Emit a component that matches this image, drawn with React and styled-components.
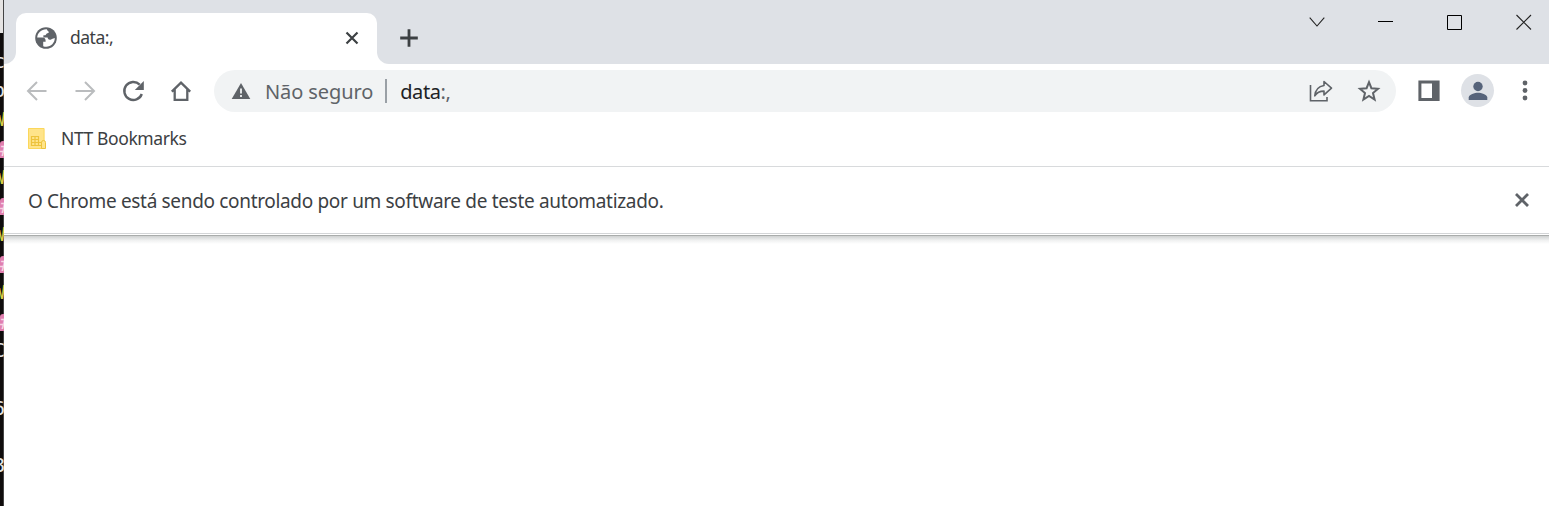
import React from 'react';
import styled, { createGlobalStyle } from 'styled-components';

const Global = createGlobalStyle`
  * { box-sizing: border-box; }
  body { margin: 0; overflow: hidden; background: #fff; }
`;

const Desktop = styled.div`
  display: flex;
  height: 506px;
  font-family: 'Noto Sans', 'Open Sans', sans-serif;
`;

const Terminal = styled.div`
  width: 4px;
  flex: none;
  overflow: hidden;
  background: linear-gradient(90deg, #0f0c0c 3px, #444 3px);
  font-family: 'DejaVu Sans Mono', monospace;
`;

const TerminalTitle = styled.div`
  width: 3px;
  height: 33px;
  margin-bottom: 14px;
  background: #e6e4e3;
`;

const TerminalRow = styled.div`
  display: flex;
  justify-content: flex-end;
  height: 28.9px;
  font-size: 20px;
  line-height: 28.9px;
  color: ${(p) => p.$color || '#e4e4e4'};
`;

const TerminalCell = styled.span`
  margin-right: -1px;
`;

const TerminalBlock = styled.span`
  width: 4px;
  height: 17px;
  margin-top: 7px;
  line-height: 17px;
  overflow: hidden;
  border-radius: 3px 0 0 0;
  background: #e07fae;
`;

const Browser = styled.div`
  flex: 1;
  min-width: 0;
  background: #fff;
`;

const TabStrip = styled.div`
  display: flex;
  height: 64px;
`;

const StripStart = styled.div`
  width: 12px;
  background: #dee1e6;
  border-bottom-right-radius: 12px;
`;

const TabSlot = styled.div`
  width: 361px;
  padding-top: 13px;
  background: linear-gradient(#dee1e6 32px, #fff 32px);
`;

const Tab = styled.div`
  display: flex;
  align-items: center;
  height: 51px;
  padding: 0 18px 2px 18px;
  background: #fff;
  border-radius: 10px 10px 0 0;
`;

const StripEnd = styled.div`
  flex: 1;
  display: flex;
  align-items: flex-start;
  padding-right: 17px;
  background: #dee1e6;
  border-bottom-left-radius: 12px;
`;

const Label = styled.span`
  white-space: pre;
  font-size: ${(p) => p.$size}px;
  letter-spacing: ${(p) => p.$track || 0}px;
  color: ${(p) => p.$color || '#3c4043'};
  line-height: 26px;
  margin-left: ${(p) => p.$left || 0}px;
  margin-top: ${(p) => p.$top || 0}px;
`;

const Icon = styled.svg`
  display: block;
  flex: none;
  margin-left: ${(p) => p.$left || 0}px;
  margin-top: ${(p) => p.$top || 0}px;
  fill: none;
  stroke: ${(p) => p.$color || '#5f6368'};
`;

const Spacer = styled.div`
  flex: 1;
`;

const Toolbar = styled.div`
  display: flex;
  align-items: center;
  height: 54px;
  padding: 0 11px 0 21px;
`;

const Omnibox = styled.div`
  display: flex;
  align-items: center;
  width: 1182px;
  height: 42px;
  margin: 0 22px 0 21px;
  padding: 0 15px 0 17px;
  border-radius: 21px;
  background: #f1f3f4;
`;

const Divider = styled.div`
  width: 2px;
  height: 24px;
  margin-left: 12px;
  background: #9aa0a6;
`;

const Avatar = styled.div`
  display: flex;
  align-items: center;
  justify-content: center;
  width: 33px;
  height: 33px;
  margin: -1px 0 0 21px;
  border-radius: 50%;
  background: #dee1e6;
`;

const Bookmarks = styled.div`
  display: flex;
  align-items: center;
  height: 49px;
  padding: 0 0 7px 23px;
  border-bottom: 1px solid #d8dadc;
`;

const InfoBar = styled.div`
  display: flex;
  align-items: center;
  height: 67px;
  padding: 0 19px 0 24px;
  border-bottom: 1px solid #d3d5d7;
`;

const PageEdge = styled.div`
  height: 9px;
  margin-top: 1px;
  border-top: 1px solid #a9acab;
  background: linear-gradient(#cfd1d1, #f0f1f1 55%, #fff);
`;

const rows = [
  { t: 'c' },
  { t: 'p' },
  { t: 'W', color: '#d8cc45' },
  { t: '#', block: true },
  { t: 'W', color: '#d8cc45' },
  { t: '#', block: true },
  { t: 'W', color: '#d8cc45' },
  { t: '#', block: true },
  { t: 'W', color: '#d8cc45' },
  { t: '#', block: true },
  { t: 'C' },
  { t: '' },
  { t: '6' },
  { t: '' },
  { t: '8' },
];

export default function App() {
  return (
    <Desktop>
      <Global />
      <Terminal>
        <TerminalTitle />
        {rows.map((r, i) => (
          <TerminalRow key={i} $color={r.block ? '#f8d6e4' : r.color}>
            {r.block ? (
              <TerminalBlock>{r.t}</TerminalBlock>
            ) : (
              <TerminalCell>{r.t}</TerminalCell>
            )}
          </TerminalRow>
        ))}
      </Terminal>
      <Browser>
        <TabStrip>
          <StripStart />
          <TabSlot>
            <Tab>
              <Icon width="24" height="24" viewBox="0 0 24 24" $top={1}>
                <circle cx="12" cy="12" r="10.8" fill="#5f6368" stroke="none" />
                <path
                  d="M12.8 3.3C7.6 3 3.4 6.8 3.2 11.6h5.2c2 0 3.2 1.2 3.2 2.8v1.4H9.2v4.5c1 .4 2 .5 3 .5 4.8 0 8.6-3.9 8.6-8.7l-2.2.6c-1 .4-1.8 1-2.8 1-1.5 0-2-1-2.2-2.2H9.4V9.2h1.8c.8 0 .8-1.2 1.6-1.6.9-.5 2-.4 2-1.6 0-.7-1.6-1-2-2.7z"
                  fill="#fff"
                  stroke="none"
                />
              </Icon>
              <Label $size={17.5} $left={12} $track={-0.5} $top={-1}>data:,</Label>
              <Spacer />
              <Icon width="14" height="14" viewBox="0 0 14 14" $color="#3c4043">
                <path d="M1.5 1.5l11 11M12.5 1.5l-11 11" strokeWidth="2.2" />
              </Icon>
            </Tab>
          </TabSlot>
          <StripEnd>
            <Icon width="18" height="18" viewBox="0 0 18 18" $color="#3c4043" $left={23} $top={29}>
              <path d="M9 .2v17.6M.2 9h17.6" strokeWidth="2.8" />
            </Icon>
            <Spacer />
            <Icon width="16" height="16" viewBox="0 0 16 16" $color="#222" $top={14}>
              <path d="M.7 3.7L8 12l7.3-8.3" strokeWidth="1.1" />
            </Icon>
            <Icon width="16" height="16" viewBox="0 0 16 16" $color="#000" $left={53} $top={14}>
              <path d="M0 7.5h15" />
            </Icon>
            <Icon width="16" height="16" viewBox="0 0 16 16" $color="#000" $left={53} $top={14}>
              <path d="M.5 1.5h14v14H.5z" />
            </Icon>
            <Icon width="16" height="16" viewBox="0 0 16 16" $color="#222" $left={53} $top={14}>
              <path d="M.5 1l14.5 14.5M15 1L.5 15.5" strokeWidth="1.1" />
            </Icon>
          </StripEnd>
        </TabStrip>
        <Toolbar>
          <Icon width="24" height="24" viewBox="0 0 24 24" $color="#babcbe" $top={-1}>
            <path d="M21.5 12H3.5M12 3l-9 9 9 9" strokeWidth="2" />
          </Icon>
          <Icon width="24" height="24" viewBox="0 0 24 24" $color="#babcbe" $left={24} $top={-1}>
            <path d="M2.5 12h18M12 3l9 9-9 9" strokeWidth="2" />
          </Icon>
          <Icon width="24" height="24" viewBox="0 0 24 24" $left={24} $top={-1}>
            <path d="M18.7 5.6A9 9 0 1 0 20.8 15" strokeWidth="2.4" />
            <path d="M22.8 2v9h-9z" fill="#5f6368" stroke="none" />
          </Icon>
          <Icon width="24" height="24" viewBox="0 0 24 24" $left={24} $top={-1}>
            <path d="M2.8 12.6L12 3.6l9.2 9M5.7 10.5v10.3h12.6V10.5" strokeWidth="2.3" />
          </Icon>
          <Omnibox>
            <Icon width="20" height="18" viewBox="0 0 20 18">
              <path d="M10 1L19.3 17H.7z" fill="#5f6368" stroke="none" />
              <path d="M10 6.5v5M10 13v2" stroke="#f1f3f4" strokeWidth="1.8" />
            </Icon>
            <Label $size={20} $left={14} $track={-0.1} $top={1} $color="#5f6368">Não seguro</Label>
            <Divider />
            <Label $size={20} $left={13} $track={-0.4} $top={1} $color="#202124">data</Label>
            <Label $size={20} $track={-0.4} $top={1} $color="#5f6368">:,</Label>
            <Spacer />
            <Icon width="24" height="24" viewBox="0 0 24 24">
              <path d="M1.5 6v15.8H18V18" strokeWidth="1.6" />
              <path d="M15 2.5l7.5 6.7-7.5 6.7v-3.8c-4.4 0-7.2 1.5-9.2 4.7.5-5.4 3.5-9.3 9.2-10.3z" strokeWidth="1.6" strokeLinejoin="round" />
            </Icon>
            <Icon width="24" height="24" viewBox="0 0 24 24" $left={24}>
              <path d="M12 3.2l2.4 6 6.6.5-5 4.3 1.6 6.5-5.6-3.5-5.6 3.5L8 14 3 9.7l6.6-.5z" strokeWidth="2" />
            </Icon>
          </Omnibox>
          <Icon width="22" height="22" viewBox="0 0 22 22">
            <path d="M1.9 1.9h18.2v17.7H1.9z" strokeWidth="3" />
            <path d="M14 1h7v19h-7z" fill="#5f6368" stroke="none" />
          </Icon>
          <Avatar>
            <Icon width="20" height="20" viewBox="0 0 20 20">
              <circle cx="10" cy="5.5" r="4.7" fill="#56637a" stroke="none" />
              <path d="M.7 19v-2.4c0-3.1 6.2-4.8 9.3-4.8s9.3 1.7 9.3 4.8V19z" fill="#56637a" stroke="none" />
            </Icon>
          </Avatar>
          <Icon width="6" height="22" viewBox="0 0 6 22" $left={28}>
            <g fill="#5f6368" stroke="none">
              <circle cx="3" cy="3" r="2.4" />
              <circle cx="3" cy="10.5" r="2.4" />
              <circle cx="3" cy="18" r="2.4" />
            </g>
          </Icon>
        </Toolbar>
        <Bookmarks>
          <Icon width="20" height="24" viewBox="0 0 20 24">
            <path d="M1.5 1.5h15.6v20H1.5z" fill="#ffe48a" stroke="#fbd75b" />
            <path d="M4.5 9.5h7v9h-7zM4.5 12.5h7M4.5 15.5h11M8 9.5v9M11.5 18.5h4v-3" stroke="#edc33c" strokeWidth="1.2" />
            <path d="M14.5 21.5v-6q0-2 2-2t2 2v6z" fill="#ffe48a" stroke="#edc33c" />
          </Icon>
          <Label $size={17.5} $left={14} $track={-0.4} $top={-1}>NTT Bookmarks</Label>
        </Bookmarks>
        <InfoBar>
          <Label $size={19} $track={-0.33} $top={2}>O Chrome está sendo controlado por um software de teste automatizado.</Label>
          <Spacer />
          <Icon width="16" height="16" viewBox="0 0 16 16">
            <path d="M2 2l12 12M14 2L2 14" strokeWidth="2.8" />
          </Icon>
        </InfoBar>
        <PageEdge />
      </Browser>
    </Desktop>
  );
}
